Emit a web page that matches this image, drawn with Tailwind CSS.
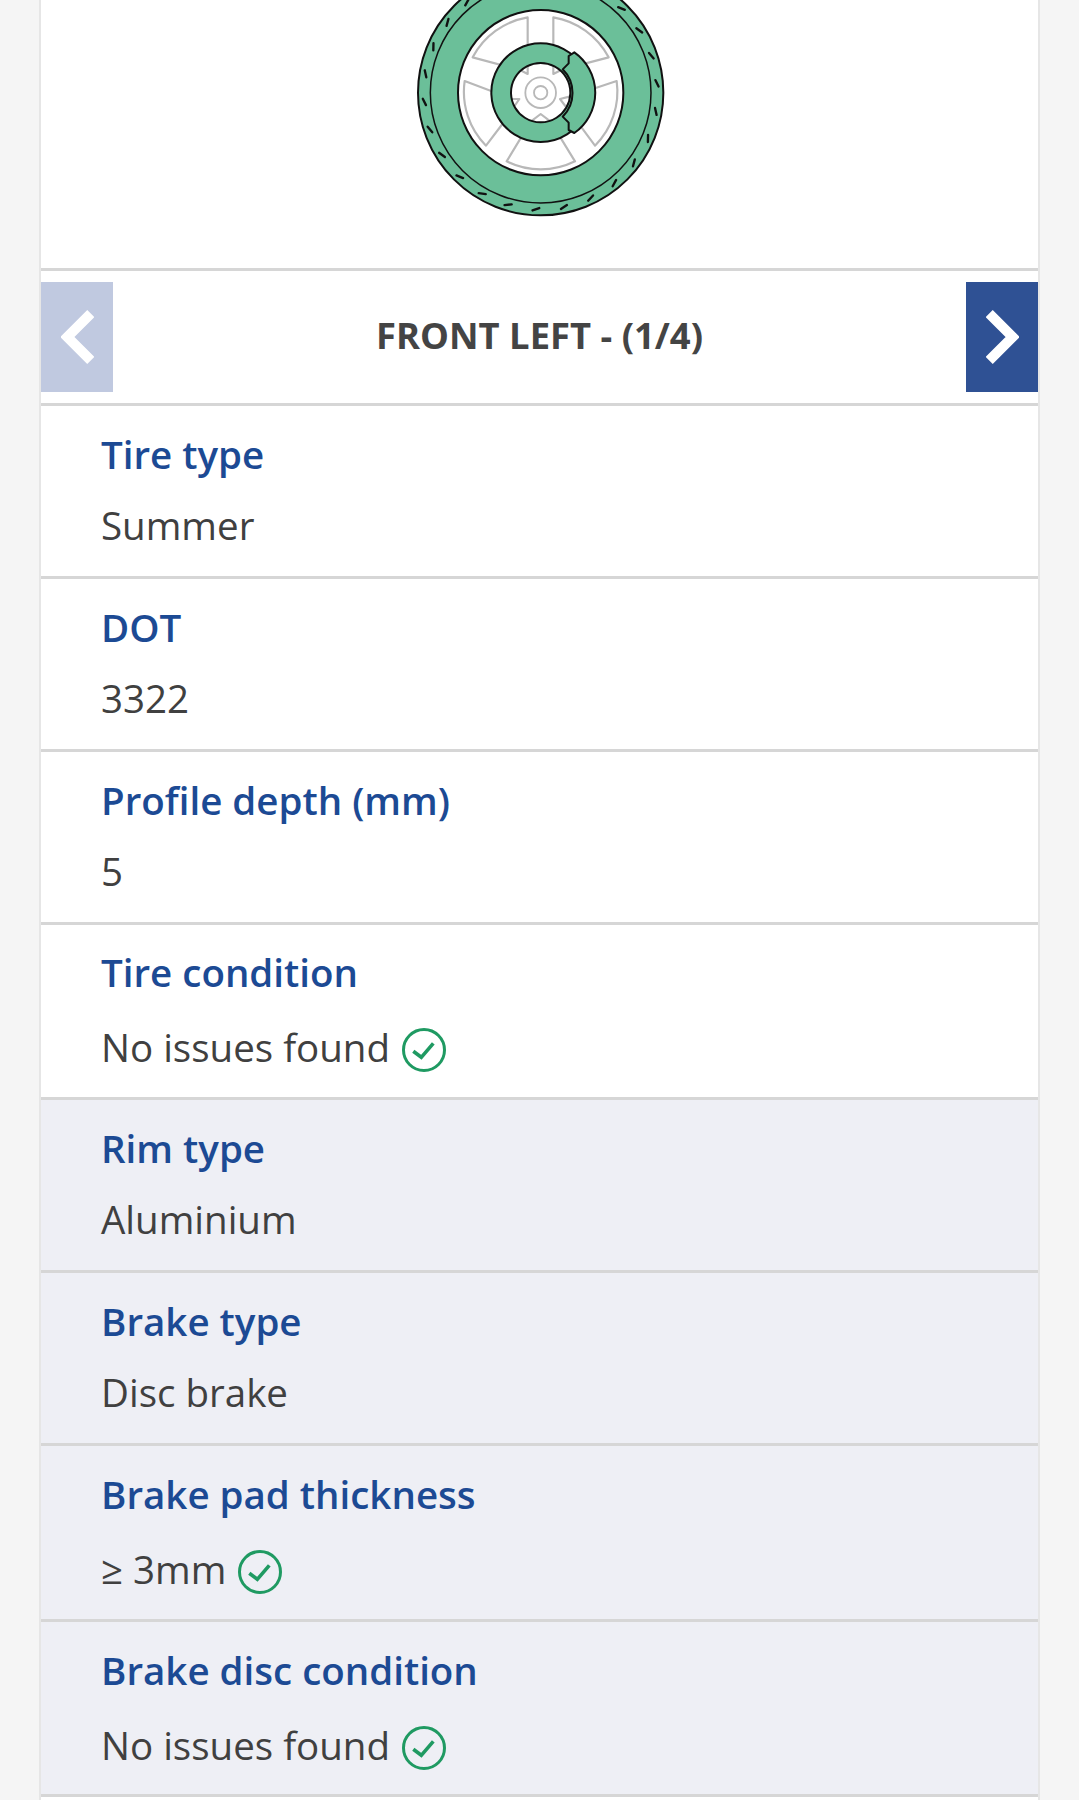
<!doctype html>
<html lang="en">
<head>
<meta charset="utf-8">
<script src="https://cdn.jsdelivr.net/npm/@tailwindcss/browser@4"></script>
<title>Front left wheel</title>
</head>
<body class="bg-[#f5f5f5] font-['Open_Sans',sans-serif] text-[#404040]">
<main class="mx-[39px] h-[1800px] w-[1001px] overflow-hidden border-x-2 border-[#e6e6e6] bg-white">
  <div class="flex h-[271px] justify-center border-b-[3px] border-[#d6d6d6]">
    <svg class="h-[240px] w-[320px]" viewBox="0 0 960 720" fill="none" stroke-linejoin="round">
      <circle cx="482" cy="278" r="368" fill="#6bbf99" stroke="#111" stroke-width="6"/>
      <circle cx="482" cy="278" r="331" stroke="#111" stroke-width="4.5"/>
      <g stroke="#111" stroke-width="7" stroke-linecap="round">
        <line transform="rotate(2.3 482 278)" x1="472" y1="-68" x2="492" y2="-76"/>
        <line transform="rotate(16.15 482 278)" x1="472" y1="-68" x2="492" y2="-76"/>
        <line transform="rotate(30 482 278)" x1="472" y1="-68" x2="492" y2="-76"/>
        <line transform="rotate(43.85 482 278)" x1="472" y1="-68" x2="492" y2="-76"/>
        <line transform="rotate(57.7 482 278)" x1="472" y1="-68" x2="492" y2="-76"/>
        <line transform="rotate(71.55 482 278)" x1="472" y1="-68" x2="492" y2="-76"/>
        <line transform="rotate(85.4 482 278)" x1="472" y1="-68" x2="492" y2="-76"/>
        <line transform="rotate(99.25 482 278)" x1="472" y1="-68" x2="492" y2="-76"/>
        <line transform="rotate(113.1 482 278)" x1="472" y1="-68" x2="492" y2="-76"/>
        <line transform="rotate(126.95 482 278)" x1="472" y1="-68" x2="492" y2="-76"/>
        <line transform="rotate(140.8 482 278)" x1="472" y1="-68" x2="492" y2="-76"/>
        <line transform="rotate(154.65 482 278)" x1="472" y1="-68" x2="492" y2="-76"/>
        <line transform="rotate(168.5 482 278)" x1="472" y1="-68" x2="492" y2="-76"/>
        <line transform="rotate(182.35 482 278)" x1="472" y1="-68" x2="492" y2="-76"/>
        <line transform="rotate(196.2 482 278)" x1="472" y1="-68" x2="492" y2="-76"/>
        <line transform="rotate(210.05 482 278)" x1="472" y1="-68" x2="492" y2="-76"/>
        <line transform="rotate(223.9 482 278)" x1="472" y1="-68" x2="492" y2="-76"/>
        <line transform="rotate(237.75 482 278)" x1="472" y1="-68" x2="492" y2="-76"/>
        <line transform="rotate(251.6 482 278)" x1="472" y1="-68" x2="492" y2="-76"/>
        <line transform="rotate(265.45 482 278)" x1="472" y1="-68" x2="492" y2="-76"/>
        <line transform="rotate(279.3 482 278)" x1="472" y1="-68" x2="492" y2="-76"/>
        <line transform="rotate(293.15 482 278)" x1="472" y1="-68" x2="492" y2="-76"/>
        <line transform="rotate(307 482 278)" x1="472" y1="-68" x2="492" y2="-76"/>
        <line transform="rotate(320.85 482 278)" x1="472" y1="-68" x2="492" y2="-76"/>
        <line transform="rotate(334.7 482 278)" x1="472" y1="-68" x2="492" y2="-76"/>
        <line transform="rotate(348.55 482 278)" x1="472" y1="-68" x2="492" y2="-76"/>
      </g>
      <circle cx="482" cy="278" r="248" fill="#fff" stroke="#111" stroke-width="6"/>
      <g stroke="#b8b8b8" stroke-width="6.5">
        <path d="M443 52V222L420 210 278 172A230 230 0 0 1 443 52Z"/>
        <path d="M520 52V222L548 208 686 172A230 230 0 0 0 520 52Z"/>
        <path d="M710 243 568 290 540 297 605 383 645 437A230 230 0 0 0 710 243Z"/>
        <path d="M254 243 397 297H418L365 375 318 437A230 230 0 0 1 254 243Z"/>
        <path d="M380 484 452 365 482 342 512 365 585 484A230 230 0 0 1 380 484Z"/>
      </g>
      <path fill-rule="evenodd" d="M482 130a148 148 0 1 0 .01 0ZM482 189a89 89 0 1 1-.01 0Z" fill="#6bbf99" stroke="#111" stroke-width="6"/>
      <circle cx="482" cy="278" r="46" stroke="#b8b8b8" stroke-width="5.5"/>
      <circle cx="482" cy="278" r="20" stroke="#b8b8b8" stroke-width="5.5"/>
      <path d="M583 157 566 168V190L548 208A100 100 0 0 1 548 350L566 368V390L583 399A148 148 0 0 0 583 157Z" fill="#6bbf99" stroke="#111" stroke-width="6"/>
    </svg>
  </div>

  <div class="flex h-[135px] items-center justify-between border-b-[3px] border-[#d6d6d6]">
    <button class="flex h-[110px] w-[72px] items-center justify-center bg-[#c0c9e0]" aria-label="Previous">
      <svg class="h-[54px] w-[33px]" viewBox="0 0 33 54"><path d="M29.8 3.6 6.4 27l23.4 23.4" fill="none" stroke="#fff" stroke-width="10"/></svg>
    </button>
    <h2 class="mb-[4px] text-[36.4px] leading-[50px] font-bold text-[#444]">FRONT LEFT - (1/4)</h2>
    <button class="flex h-[110px] w-[72px] items-center justify-center bg-[#2f5194]" aria-label="Next">
      <svg class="ml-[2px] h-[54px] w-[33px]" viewBox="0 0 33 54"><path d="M3.2 3.6 26.6 27 3.2 50.4" fill="none" stroke="#fff" stroke-width="10"/></svg>
    </button>
  </div>

  <dl>
    <div class="h-[173px] border-b-[3px] border-[#d6d6d6] pt-[23px] pl-[60px]">
      <dt class="text-[38.5px] leading-[50px] font-semibold text-[#1c4a94]">Tire type</dt>
      <dd class="mt-[21px] text-[38.5px] leading-[50px]">Summer</dd>
    </div>
    <div class="h-[173px] border-b-[3px] border-[#d6d6d6] pt-[23px] pl-[60px]">
      <dt class="text-[38.5px] leading-[50px] font-semibold text-[#1c4a94]">DOT</dt>
      <dd class="mt-[21px] text-[38.5px] leading-[50px]">3322</dd>
    </div>
    <div class="h-[173px] border-b-[3px] border-[#d6d6d6] pt-[23px] pl-[60px]">
      <dt class="text-[38.5px] leading-[50px] font-semibold text-[#1c4a94]">Profile depth (mm)</dt>
      <dd class="mt-[21px] text-[38.5px] leading-[50px]">5</dd>
    </div>
    <div class="h-[175px] border-b-[3px] border-[#d6d6d6] pt-[22px] pl-[60px]">
      <dt class="text-[38.5px] leading-[50px] font-semibold text-[#1c4a94]">Tire condition</dt>
      <dd class="mt-[24px] flex items-center gap-[12px] text-[38.5px] leading-[50px]">No issues found
        <svg class="mt-[7px] h-[44px] w-[44px]" viewBox="0 0 44 44" fill="none" stroke="#1f9a62"><circle cx="22" cy="22" r="20.5" stroke-width="3"/><path d="M11.3 23.3l8 6 12-14" stroke-width="3.6"/></svg>
      </dd>
    </div>
    <div class="h-[173px] border-b-[3px] border-[#d6d6d6] bg-[#eeeff5] pt-[23px] pl-[60px]">
      <dt class="text-[38.5px] leading-[50px] font-semibold text-[#1c4a94]">Rim type</dt>
      <dd class="mt-[21px] text-[38.5px] leading-[50px]">Aluminium</dd>
    </div>
    <div class="h-[173px] border-b-[3px] border-[#d6d6d6] bg-[#eeeff5] pt-[23px] pl-[60px]">
      <dt class="text-[38.5px] leading-[50px] font-semibold text-[#1c4a94]">Brake type</dt>
      <dd class="mt-[21px] text-[38.5px] leading-[50px]">Disc brake</dd>
    </div>
    <div class="h-[176px] border-b-[3px] border-[#d6d6d6] bg-[#eeeff5] pt-[23px] pl-[60px]">
      <dt class="text-[38.5px] leading-[50px] font-semibold text-[#1c4a94]">Brake pad thickness</dt>
      <dd class="mt-[25px] flex items-center gap-[12px] text-[38.5px] leading-[50px]">≥ 3mm
        <svg class="mt-[5px] h-[44px] w-[44px]" viewBox="0 0 44 44" fill="none" stroke="#1f9a62"><circle cx="22" cy="22" r="20.5" stroke-width="3"/><path d="M11.3 23.3l8 6 12-14" stroke-width="3.6"/></svg>
      </dd>
    </div>
    <div class="h-[175px] border-b-[3px] border-[#d6d6d6] bg-[#eeeff5] pt-[23px] pl-[60px]">
      <dt class="text-[38.5px] leading-[50px] font-semibold text-[#1c4a94]">Brake disc condition</dt>
      <dd class="mt-[24px] flex items-center gap-[12px] text-[38.5px] leading-[50px]">No issues found
        <svg class="mt-[7px] h-[44px] w-[44px]" viewBox="0 0 44 44" fill="none" stroke="#1f9a62"><circle cx="22" cy="22" r="20.5" stroke-width="3"/><path d="M11.3 23.3l8 6 12-14" stroke-width="3.6"/></svg>
      </dd>
    </div>
  </dl>
</main>
</body>
</html>
